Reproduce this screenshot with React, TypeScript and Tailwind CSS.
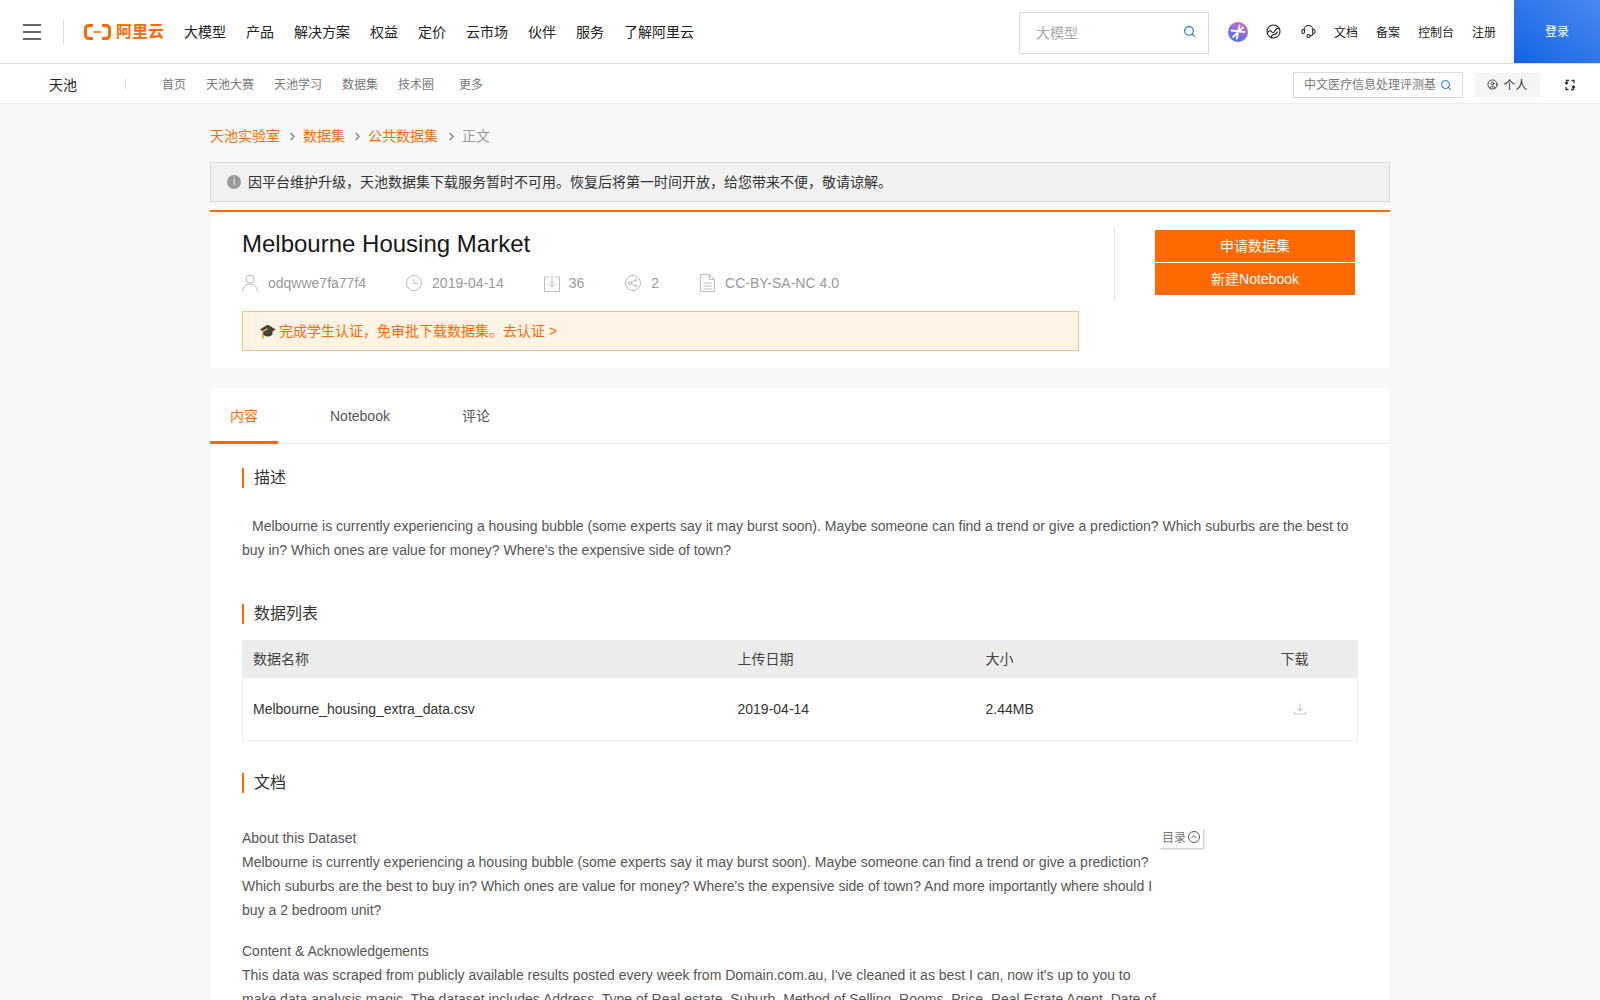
import React from 'react';
import { Search, ChevronRight, CircleUser } from 'lucide-react';

const mainNav = ['大模型', '产品', '解决方案', '权益', '定价', '云市场', '伙伴', '服务', '了解阿里云'];

const Heading = ({ children }: { children: React.ReactNode }) => (
  <div className="flex items-center h-5 border-l-2 border-[#ff6a00] pl-2.5 text-base leading-5 text-[#333]">{children}</div>
);

const App: React.FC = () => {
  return (
    <div className="h-screen overflow-hidden bg-[#f8f8f8] text-[#333] font-['Liberation_Sans','Noto_Sans_CJK_SC',sans-serif]">
      {/* top bar */}
      <div className="flex items-center h-16 bg-white border-b border-[#d8d8d8]">
        <div className="ml-[23px] flex flex-col gap-[5px] w-[18px]">
          <span className="h-0.5 bg-[#666]" />
          <span className="h-0.5 bg-[#666]" />
          <span className="h-0.5 bg-[#666]" />
        </div>
        <div className="ml-[22px] w-px h-6 bg-[#ddd]" />
        <div className="ml-5 flex items-center gap-[5px] text-[#ff6a00] w-20">
          <svg className="shrink-0" width="27" height="16" viewBox="0 0 27 16" fill="none">
            <path d="M9 1.500H5C2.800 1.500 1.500 2.800 1.500 5v6c0 2.200 1.300 3.500 3.500 3.500H9M18 1.500h4c2.200 0 3.500 1.300 3.500 3.500v6c0 2.200-1.300 3.500-3.500 3.500h-4" stroke="#ff6a00" strokeWidth="3" />
            <path d="M9.500 8h8" stroke="#ff6a00" strokeWidth="1.500" />
          </svg>
          <span className="text-[16px] font-bold leading-none whitespace-nowrap">阿里云</span>
        </div>
        <div className="ml-5 flex items-center gap-5 text-sm text-[#222]">
          {mainNav.map(item => <span key={item}>{item}</span>)}
        </div>
        <div className="ml-auto flex items-center justify-between w-[190px] h-[42px] mt-[3px] border border-[#d8d8d8] pl-[16px] pr-[12px] text-sm text-[#aaa]">
          <span>大模型</span>
          <Search size={13} className="text-[#1a66e8] -mt-1" />
        </div>
        <svg className="ml-[19px]" width="20" height="20" viewBox="0 0 20 20">
          <defs>
            <linearGradient id="spark" x1="0.7" y1="0" x2="0.3" y2="1">
              <stop offset="0" stopColor="#d06ab8" />
              <stop offset="0.5" stopColor="#8a6ee0" />
              <stop offset="1" stopColor="#3f7bf0" />
            </linearGradient>
          </defs>
          <circle cx="10" cy="10" r="10" fill="url(#spark)" />
          <path d="M11.500 3.500 8.800 16.500M3.500 8.500l13 1.500M5 15l10-9.500" stroke="#fff" strokeWidth="1.800" strokeLinecap="round" />
        </svg>
        <svg className="ml-[18px]" width="15" height="15" viewBox="0 0 15 15" fill="none" stroke="#222" strokeWidth="1.100">
          <circle cx="7.500" cy="7.500" r="6.500" />
          <path d="M1.300 9.500c1.500-3 3-3.500 4-2s2.500 2 3.500-.5 2-3 4.500-3M5 13.500c.5-2 1.500-3 3-3s3-1 3.500-3" />
        </svg>
        <svg className="ml-[20px]" width="15" height="15" viewBox="0 0 15 15" fill="none" stroke="#222" strokeWidth="1.100">
          <path d="M3 6a4.500 4.500 0 0 1 9 0M12 9.500a3 3 0 0 1-3 2.500" />
          <rect x="1" y="5.500" width="2.500" height="4" rx="1.200" />
          <rect x="11.500" y="5.500" width="2.500" height="4" rx="1.200" />
          <circle cx="7.500" cy="12" r="1.500" />
        </svg>
        <div className="ml-[18px] flex items-center text-xs text-[#222] mt-0.5">
          <span>文档</span>
          <span className="ml-[18px]">备案</span>
          <span className="ml-[18px]">控制台</span>
          <span className="ml-[18px]">注册</span>
        </div>
        <div className="ml-[18px] flex items-center justify-center w-[86px] h-[63px] self-start text-xs text-white bg-gradient-to-tr from-[#0f62e6] to-[#4a8af0]">登录</div>
      </div>

      {/* sub nav */}
      <div className="flex items-center h-10 bg-white border-b border-[#ececec]">
        <span className="ml-[49px] mt-[2px] text-sm text-[#222]">天池</span>
        <div className="ml-[48px] w-px h-3 bg-[#ddd]" />
        <div className="ml-9 flex items-center mt-[3px] text-xs text-[#777]">
          <span>首页</span>
          <span className="ml-5">天池大赛</span>
          <span className="ml-5">天池学习</span>
          <span className="ml-5">数据集</span>
          <span className="ml-5">技术圈</span>
          <span className="ml-[25px]">更多</span>
        </div>
        <div className="ml-auto flex items-center justify-between w-[170px] h-[26px] mt-[2px] border border-[#d8d8d8] pl-2.5 pr-[10px] text-xs text-[#777]">
          <span className="whitespace-nowrap w-[132px]">中文医疗信息处理评测基</span>
          <Search size={12} className="text-[#1a66e8] shrink-0" />
        </div>
        <div className="ml-3 mt-[2px] flex items-center justify-center gap-[5px] w-[65px] h-6 bg-[#f5f5f5] text-xs text-[#333]">
          <CircleUser size={11} />
          <span className="mt-0.5">个人</span>
        </div>
        <svg className="ml-6 mr-6 mt-[2px]" width="12" height="12" viewBox="0 0 12 12" fill="none" stroke="#333" strokeWidth="1.300">
          <path d="M5 1.500H2.500v3M1 3.500l1.500 1.500L4 3.500M7 10.500h2.500v-3M8 8.500 9.500 7 11 8.500M7.500 1.500H10v2.500M4.500 10.500H2V8" />
        </svg>
      </div>

      <div className="mx-auto w-[1180px]">
        {/* breadcrumb */}
        <div className="flex items-center h-5 mt-[22px] text-sm text-[#ff6a00]">
          <span>天池实验室</span>
          <ChevronRight size={13} className="ml-[6px] mr-[4px] text-[#777]" />
          <span>数据集</span>
          <ChevronRight size={13} className="ml-[6px] mr-[4px] text-[#777]" />
          <span>公共数据集</span>
          <ChevronRight size={13} className="ml-[7px] mr-[4px] text-[#777]" />
          <span className="text-[#999]">正文</span>
        </div>

        {/* notice */}
        <div className="flex items-center h-10 mt-[16px] px-4 bg-[#f1f1f1] border border-[#d8d8d8] text-sm text-[#333]">
          <span className="flex items-center justify-center w-[14px] h-[14px] mr-[7px] -mt-px rounded-full bg-[#999] text-[10px] text-white leading-none">i</span>
          因平台维护升级，天池数据集下载服务暂时不可用。恢复后将第一时间开放，给您带来不便，敬请谅解。
        </div>

        {/* dataset head */}
        <div className="flex mt-2 h-[158px] bg-white border-t-2 border-[#ff6a00]">
          <div className="w-[837px] ml-8">
            <h1 className="mt-[16px] text-2xl leading-8 text-[#181818]">Melbourne Housing Market</h1>
            <div className="flex items-center mt-[13px] h-5 text-sm text-[#999]">
              <svg width="16" height="20" viewBox="0 0 16 20" fill="none" stroke="#bbb">
                <circle cx="8" cy="6" r="4" />
                <path d="M.5 19c.3-5 3-8 7.500-8s7.200 3 7.500 8" />
              </svg>
              <span className="ml-2.5">odqwwe7fa77f4</span>
              <svg className="ml-10" width="16" height="16" viewBox="0 0 16 16" fill="none" stroke="#bbb">
                <circle cx="8" cy="8" r="7.500" />
                <path d="M8 3.500V8.500H12" />
              </svg>
              <span className="ml-[10px]">2019-04-14</span>
              <svg className="ml-10" width="16" height="18" viewBox="0 0 16 18" fill="none" stroke="#bbb">
                <path d="M5 3H.5v14.500h15V3H11M8 1v12M5 10l3 3 3-3" />
              </svg>
              <span className="ml-[9px]">36</span>
              <svg className="ml-[41px]" width="16" height="16" viewBox="0 0 16 16" fill="none" stroke="#bbb">
                <circle cx="8" cy="8" r="7.500" />
                <circle cx="11" cy="5" r="1" />
                <circle cx="5" cy="8" r="1.500" />
                <circle cx="11" cy="11" r="1" />
                <path d="M6 7.500 10 5.500M6 8.500l4 2" />
              </svg>
              <span className="ml-[10px]">2</span>
              <svg className="ml-[41px]" width="15" height="18" viewBox="0 0 15 18" fill="none" stroke="#bbb">
                <path d="M.5.500h9l5 5v12H.5zM9.500.500v5h5M3.500 9h8M3.500 12h8M3.500 15h8" />
              </svg>
              <span className="ml-[10px]">CC-BY-SA-NC 4.0</span>
            </div>
            <div className="flex items-center h-10 mt-[18px] px-4 bg-[#fff3e6] border border-[#ffbf80] text-sm text-[#ff6a00]">
              <span className="text-[#333]">🎓</span>
              <span className="ml-[3px]">完成学生认证，免审批下载数据集。去认证 &gt;</span>
            </div>
          </div>
          <div className="ml-[35px] mt-4 w-px h-[73px] bg-[#e3e3e3]" />
          <div className="ml-10 mt-[18px] flex flex-col gap-px w-[200px] text-sm text-white">
            <div className="flex items-center justify-center h-8 bg-[#ff6a00]">申请数据集</div>
            <div className="flex items-center justify-center h-8 bg-[#ff6a00]">新建Notebook</div>
          </div>
        </div>

        {/* content */}
        <div className="mt-5 bg-white pb-10">
          <div className="flex h-14 border-b border-[#e8e8e8] text-sm text-[#555]">
            <div className="flex items-center justify-center w-[68px] h-14 pt-[3px] border-b-[3px] border-[#ff6a00] text-[#ff6a00]">内容</div>
            <div className="flex items-center ml-[52px]">Notebook</div>
            <div className="flex items-center ml-[72px]">评论</div>
          </div>

          <div className="px-8">
            <div className="pt-6"><Heading>描述</Heading></div>
            <p className="mt-[26px] text-sm leading-6 text-[#555] indent-[10px]">
              Melbourne is currently experiencing a housing bubble (some experts say it may burst soon). Maybe someone can find a trend or give a prediction? Which suburbs are the best to buy in? Which ones are value for money? Where's the expensive side of town?
            </p>

            <div className="mt-[42px]"><Heading>数据列表</Heading></div>
            <table className="mt-4 w-[1116px] border border-[#eee] text-sm text-left">
              <thead>
                <tr className="h-[37px] bg-[#ececec] text-[#444]">
                  <th className="w-[485px] pl-2.5 font-normal">数据名称</th>
                  <th className="w-[248px] pl-2.5 font-normal">上传日期</th>
                  <th className="w-[265px] pl-2.5 font-normal">大小</th>
                  <th className="font-normal pl-10">下载</th>
                </tr>
              </thead>
              <tbody>
                <tr className="h-[63px] text-[#333]">
                  <td className="pl-2.5">Melbourne_housing_extra_data.csv</td>
                  <td className="pl-2.5">2019-04-14</td>
                  <td className="pl-2.5">2.44MB</td>
                  <td className="pl-[52px]">
                    <svg width="14" height="14" viewBox="0 0 14 14" fill="none" stroke="#ccc" strokeWidth="1.200">
                      <path d="M7 1.500v7M4.500 6.500 7 9l2.500-2.500M1.500 9.500v2.500h11V9.500" />
                    </svg>
                  </td>
                </tr>
              </tbody>
            </table>

            <div className="mt-8"><Heading>文档</Heading></div>
            <div className="relative mt-[33px] w-[918px] text-sm leading-6 text-[#555]">
              <div className="absolute left-[917px] top-[2px] flex items-center gap-[2px] w-11 h-[20px] pl-[3px] bg-white shadow-[1px_1px_2px_rgba(0,0,0,0.25)] text-xs text-[#777]">
                <span>目录</span>
                <svg className="-mt-0.5" width="12" height="12" viewBox="0 0 12 12" fill="none" stroke="#555">
                  <circle cx="6" cy="6" r="5.500" />
                  <path d="M3.500 7 6 4.500 8.500 7" />
                </svg>
              </div>
              <p>About this Dataset</p>
              <p>Melbourne is currently experiencing a housing bubble (some experts say it may burst soon). Maybe someone can find a trend or give a prediction? Which suburbs are the best to buy in? Which ones are value for money? Where's the expensive side of town? And more importantly where should I buy a 2 bedroom unit?</p>
              <p className="mt-[17px]">Content &amp; Acknowledgements</p>
              <p>This data was scraped from publicly available results posted every week from Domain.com.au, I've cleaned it as best I can, now it's up to you to make data analysis magic. The dataset includes Address, Type of Real estate, Suburb, Method of Selling, Rooms, Price, Real Estate Agent, Date of Sale and distance from C.B.D.</p>
            </div>
          </div>
        </div>
      </div>
    </div>
  );
};

export default App;
